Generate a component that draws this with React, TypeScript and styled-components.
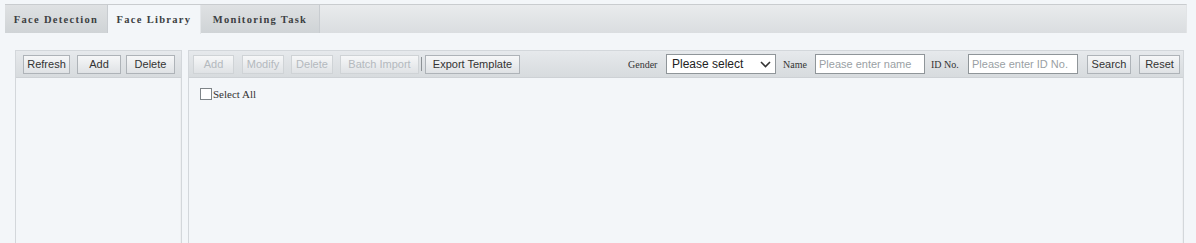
import React from "react";
import styled, { createGlobalStyle } from "styled-components";

const Global = createGlobalStyle`
  html, body { margin: 0; padding: 0; background: #f3f6f9; overflow: hidden; }
  body { font-family: "Liberation Sans", Arial, sans-serif; }
`;

const Page = styled.div`
  width: 1196px;
  height: 243px;
  padding: 4px 9px 0 5px;
  box-sizing: border-box;
  display: flex;
  flex-direction: column;
`;

const TabBar = styled.div`
  display: flex;
  height: 29px;
  border-top: 1px solid #c9cccf;
  border-right: 1px solid #e2e4e6;
  background: linear-gradient(#e9ebed, #dadde0);
  box-sizing: border-box;
`;

const Tab = styled.div<{ $active?: boolean; $w: number }>`
  width: ${(p) => p.$w}px;
  display: flex;
  align-items: center;
  justify-content: center;
  font-family: "Liberation Serif", "Times New Roman", serif;
  font-weight: bold;
  font-size: 10.5px;
  letter-spacing: 1.3px;
  color: #3c3f42;
  box-sizing: border-box;
  background: ${(p) => (p.$active ? "#f3f6f9" : "linear-gradient(#dfe1e3, #cfd3d6)")};
  border-right: 1px solid ${(p) => (p.$active ? "#e4e7ea" : "#c8ccd0")};
  height: ${(p) => (p.$active ? "29px" : "28px")};
`;

const Content = styled.div`
  flex: 1;
  display: flex;
  gap: 6px;
  padding: 17px 3px 0 10px;
  min-height: 0;
`;

const Panel = styled.div<{ $w?: number }>`
  ${(p) => (p.$w ? `width: ${p.$w}px;` : "flex: 1;")}
  min-width: 0;
  overflow: hidden;
  border: 1px solid #d3d7db;
  border-bottom: none;
  box-shadow: inset -1px 0 0 #eef0f2;
  display: flex;
  flex-direction: column;
  box-sizing: border-box;
  background: #f3f6f9;
`;

const Toolbar = styled.div<{ $pl: number }>`
  height: 27px;
  flex-shrink: 0;
  display: flex;
  align-items: center;
  padding: 0 3px 0 ${(p) => p.$pl}px;
  background: linear-gradient(#e6e9ec, #d7dbde);
  border-bottom: 1px solid #cdd1d5;
  box-sizing: border-box;
`;

const Button = styled.button<{ $w: number; $ml?: number; $disabled?: boolean }>`
  width: ${(p) => p.$w}px;
  margin-left: ${(p) => p.$ml ?? 0}px;
  flex-shrink: 0;
  height: 19px;
  padding: 0;
  border: 1px solid ${(p) => (p.$disabled ? "#cfd3d6" : "#aeb3b8")};
  background: linear-gradient(#f6f7f8, #dfe2e5);
  font-family: "Liberation Sans", Arial, sans-serif;
  font-size: 11px;
  color: ${(p) => (p.$disabled ? "#b4b9be" : "#333")};
  box-sizing: border-box;
  cursor: default;
`;

const Sep = styled.span`
  width: 1px;
  height: 14px;
  background: #8d9296;
  margin: 0 3px 0 2px;
`;

const Spacer = styled.div`
  flex: 1;
`;

const Label = styled.span<{ $w: number; $ml: number }>`
  width: ${(p) => p.$w}px;
  flex-shrink: 0;
  font-family: "Liberation Serif", "Times New Roman", serif;
  font-size: 10px;
  color: #333;
  margin-left: ${(p) => p.$ml}px;
  margin-right: 7px;
  white-space: nowrap;
`;

const Select = styled.div`
  width: 110px;
  flex-shrink: 0;
  height: 20px;
  border: 1px solid #8f9599;
  background: #fff;
  display: flex;
  align-items: center;
  justify-content: space-between;
  padding: 0 4px 0 5px;
  box-sizing: border-box;
  font-size: 12px;
  color: #222;
`;

const Input = styled.input`
  width: 110px;
  flex-shrink: 0;
  height: 20px;
  border: 1px solid #8f9599;
  background: #fff;
  padding: 0 3px;
  box-sizing: border-box;
  font-family: "Liberation Sans", Arial, sans-serif;
  font-size: 11px;
  &::placeholder { color: #9a9fa4; }
`;

const Body = styled.div`
  padding: 10px 11px;
`;

const CheckRow = styled.label`
  display: flex;
  align-items: center;
  gap: 1px;
  font-family: "Liberation Serif", "Times New Roman", serif;
  font-size: 11px;
  color: #333;
`;

const Box = styled.span`
  width: 12px;
  height: 12px;
  border: 1px solid #7e8488;
  background: #fff;
  box-sizing: border-box;
`;

export default function App() {
  return (
    <>
      <Global />
      <Page>
        <TabBar>
          <Tab $w={103}>Face Detection</Tab>
          <Tab $w={93} $active>Face Library</Tab>
          <Tab $w={119}>Monitoring Task</Tab>
        </TabBar>
        <Content>
          <Panel $w={167}>
            <Toolbar $pl={7}>
              <Button $w={47}>Refresh</Button>
              <Button $w={44} $ml={7}>Add</Button>
              <Button $w={49} $ml={5}>Delete</Button>
            </Toolbar>
          </Panel>
          <Panel>
            <Toolbar $pl={4}>
              <Button $w={41} $disabled>Add</Button>
              <Button $w={42} $ml={8} $disabled>Modify</Button>
              <Button $w={42} $ml={7} $disabled>Delete</Button>
              <Button $w={79} $ml={7} $disabled>Batch Import</Button>
              <Sep />
              <Button $w={95}>Export Template</Button>
              <Spacer />
              <Label $w={31} $ml={0}>Gender</Label>
              <Select>
                <span>Please select</span>
                <svg width="11" height="7" viewBox="0 0 11 7">
                  <path d="M1 1l4.5 4.5L10 1" stroke="#333" strokeWidth="1.6" fill="none" />
                </svg>
              </Select>
              <Label $w={25} $ml={7}>Name</Label>
              <Input placeholder="Please enter name" />
              <Label $w={30} $ml={6}>ID No.</Label>
              <Input placeholder="Please enter ID No." />
              <Button $w={44} $ml={9}>Search</Button>
              <Button $w={41} $ml={8}>Reset</Button>
            </Toolbar>
            <Body>
              <CheckRow>
                <Box />
                Select All
              </CheckRow>
            </Body>
          </Panel>
        </Content>
      </Page>
    </>
  );
}
